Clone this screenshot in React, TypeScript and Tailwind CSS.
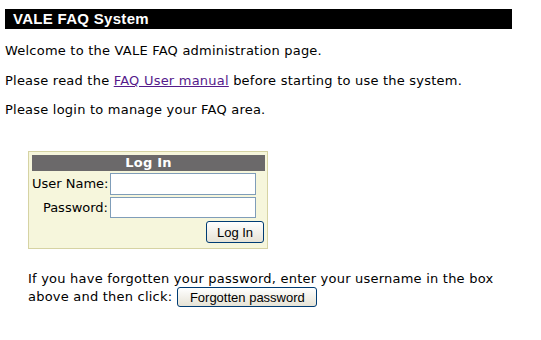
import React from 'react';

const verdana = "font-['DejaVu_Sans',Verdana,sans-serif]";
const arial = "font-['Liberation_Sans',Arial,sans-serif]";

const XpButton: React.FC<{ children: React.ReactNode; className?: string }> = ({ children, className }) => (
  <button
    type="button"
    className={`${arial} text-[13px] text-black leading-none tracking-normal border border-[#003c74] rounded-[3px] bg-gradient-to-b from-white to-[#e6e3d6] ${className ?? ''}`}
  >
    {children}
  </button>
);

const App: React.FC = () => {
  return (
    <div className={`min-h-[340px] w-[541px] bg-white pl-[5px] pt-[9px] text-black tracking-[0.22px] ${verdana}`}>
      {/* TITLE BAR */}
      <h1 className={`w-[507px] h-[20px] bg-black text-white font-bold text-[15px] leading-[20px] pl-[8px] tracking-[0.3px] ${arial}`}>
        VALE FAQ System
      </h1>

      <p className="mt-[14px] text-[13px] leading-[16px]">Welcome to the VALE FAQ administration page.</p>
      <p className="mt-[14px] text-[13px] leading-[16px]">
        Please read the <a href="#" className="text-[#551a8b] underline">FAQ User manual</a> before starting to use the system.
      </p>
      <p className="mt-[13px] text-[13px] leading-[16px]">Please login to manage your FAQ area.</p>

      {/* LOGIN BOX */}
      <div className="ml-[23px] mt-[33px] w-[240px] h-[98px] border border-[#d6d3a3] bg-[#f6f6dc] p-[3px]">
        <div className="h-[16px] w-[233px] bg-[#6b696a] text-white font-bold text-[13px] leading-[16px] text-center">
          Log In
        </div>
        <div className="grid grid-cols-[76px_146px] gap-x-[2px] gap-y-[2px] mt-[2px] text-[13px] tracking-normal">
          <label className="text-right leading-[22px] whitespace-nowrap">User Name:</label>
          <input className="h-[22px] w-[146px] border border-[#7f9db9] bg-white" />
          <label className="text-right leading-[21px] whitespace-nowrap">Password:</label>
          <input type="password" className="h-[21px] w-[146px] border border-[#7f9db9] bg-white" />
        </div>
        <div className="flex justify-end mt-[3px]">
          <XpButton className="w-[58px] h-[22px]">Log In</XpButton>
        </div>
      </div>

      {/* FORGOTTEN PASSWORD */}
      <p className="ml-[23px] mt-[22px] text-[13px] leading-[16px]">
        If you have forgotten your password, enter your username in the box
        <br />
        <span className="inline-flex items-center">
          above and then click:
          <XpButton className="ml-[5px] w-[140px] h-[20px]">Forgotten password</XpButton>
        </span>
      </p>
    </div>
  );
};

export default App;
